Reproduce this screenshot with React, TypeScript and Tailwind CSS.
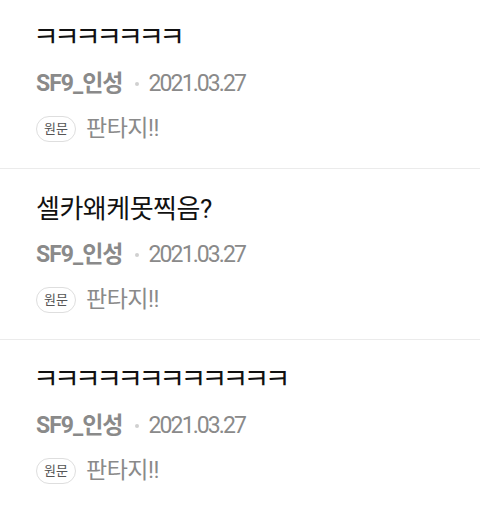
import React from "react";

type Item = { title: string; jamo?: boolean };

const items: Item[] = [
  { title: "ㅋㅋㅋㅋㅋㅋㅋ", jamo: true },
  { title: "셀카왜케못찍음?" },
  { title: "ㅋㅋㅋㅋㅋㅋㅋㅋㅋㅋㅋㅋ", jamo: true },
];

const font = { fontFamily: '"Roboto", "Noto Sans CJK KR", sans-serif' };

export default function App() {
  return (
    <div className="w-[480px] h-[505px] overflow-hidden bg-white" style={font}>
      {items.map((it, i) => (
        <div
          key={i}
          className={`px-[36px] pb-[26px] border-b border-[#ebebeb] ${i === 0 ? "pt-[22px]" : "pt-[24px]"}`}
        >
          <div
            className={`h-[32px] leading-[32px] text-[#111] ${it.jamo ? "text-[28px] tracking-[-4.7px] -ml-[3px]" : "text-[26px] tracking-[-0.5px]"}`}
          >
            {it.title}
          </div>
          <div className="mt-[15px] h-[30px] flex items-center text-[23px] text-[#8a8a8a]">
            <span className="font-bold tracking-[-1px]">SF9_인성</span>
            <span className="ml-[12px] mr-[10px] w-[4px] h-[4px] rounded-full bg-[#d0d0d0]" />
            <span className="tracking-[-1.9px]">2021.03.27</span>
          </div>
          <div className="mt-[17px] h-[26px] flex items-center">
            <span className="h-[26px] w-[40px] flex items-center justify-center rounded-full border border-[#dedede] text-[13px] text-[#555]">
              원문
            </span>
            <span className="ml-[10px] text-[23px] text-[#8a8a8a] tracking-[-0.5px]">판타지!!</span>
          </div>
        </div>
      ))}
    </div>
  );
}
